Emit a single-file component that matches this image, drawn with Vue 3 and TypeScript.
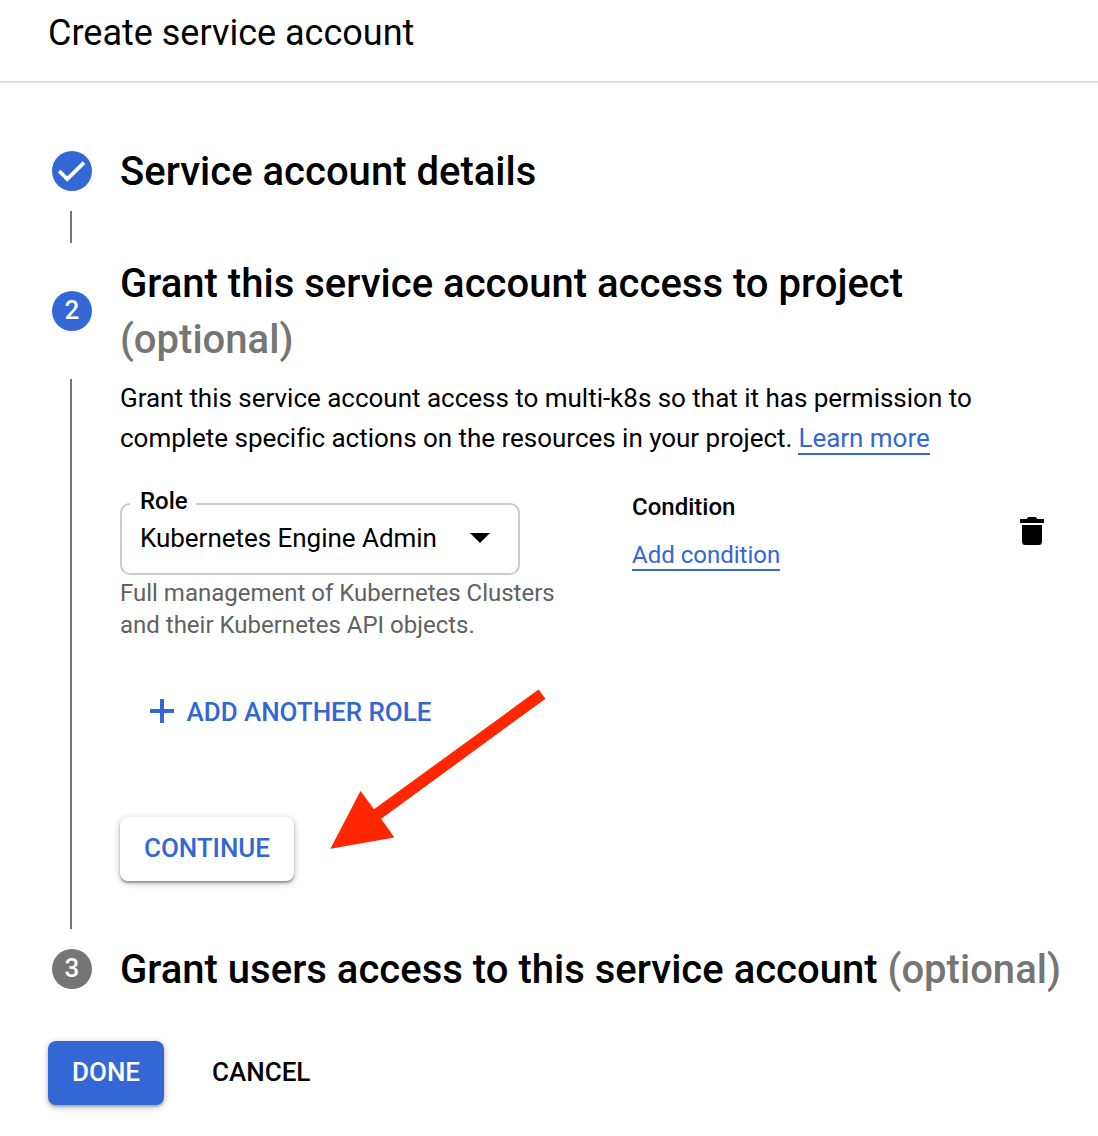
<script setup lang="ts">
const descriptionLines = [
  'Grant this service account access to multi-k8s so that it has permission to',
  'complete specific actions on the resources in your project.',
]
</script>

<template>
  <div class="page">
    <header class="bar">
      <h1 class="title">Create service account</h1>
    </header>

    <main class="stepper">
      <section class="step-head">
        <span class="badge done">
          <svg width="40" height="40" viewBox="0 0 40 40">
            <path d="M7.2 20 15.2 28 32 11.600" fill="none" stroke="#fff" stroke-width="3.800" />
          </svg>
        </span>
        <h2 class="heading">Service account details</h2>
      </section>
      <div class="connector"></div>

      <section class="step-head two">
        <span class="badge">2</span>
        <h2 class="heading">
          <span>Grant this service account access to project</span><br />
          <span class="optional">(optional)</span>
        </h2>
      </section>
      <div class="step-body">
        <div class="rail"></div>
        <div class="content">
          <div class="desc">
            <div>{{ descriptionLines[0] }}</div>
            <div class="desc-last">
              <span>{{ descriptionLines[1] }}</span>
              <div><a class="link">Learn more</a></div>
            </div>
          </div>
          <div class="role-row">
            <div class="role">
              <div class="select">
                <span class="label">Role</span>
                <span class="value">Kubernetes Engine Admin</span>
                <svg class="caret" width="20" height="10" viewBox="0 0 20 10"><path d="M0 0h20L10 10z" /></svg>
              </div>
              <p class="hint">Full management of Kubernetes Clusters and their Kubernetes API objects.</p>
            </div>
            <div class="condition">
              <div class="cond-title">Condition</div>
              <a class="link">Add condition</a>
            </div>
            <svg class="trash" width="24" height="28" viewBox="0 0 24 28">
              <path d="M0 2h7V1.600Q7.400 0 9 0h6q1.600 0 2 1.600V2h7v4H0zM2 8h20v16.500q0 3.500-3.500 3.500h-13Q2 28 2 24.500z" />
            </svg>
          </div>
          <button class="add">
            <svg width="24" height="24" viewBox="0 0 24 24"><path d="M10 0h4v10h10v4H14v10h-4V14H0v-4h10z" fill="#3367d6" /></svg>
            <span>ADD ANOTHER ROLE</span>
          </button>
          <button class="btn raised">CONTINUE</button>
        </div>
      </div>

      <section class="step-head three">
        <span class="badge grey">3</span>
        <h2 class="heading">Grant users access to this service account <span class="optional">(optional)</span></h2>
      </section>
    </main>

    <footer class="actions">
      <button class="btn primary">DONE</button>
      <button class="btn flat">CANCEL</button>
    </footer>

    <svg class="arrow" width="216" height="162" viewBox="330 688 216 162">
      <path d="M538.600 689.600 545.400 698.700 381.200 818.800 394.300 837.600 330.400 848.800 360.500 791 374 809.200z" fill="#ff2600" />
    </svg>
  </div>
</template>

<style>
body {
  margin: 0;
  background: #fff;
}
</style>

<style scoped>
.page {
  position: relative;
  width: 1098px;
  height: 1136px;
  overflow: hidden;
  background: #fff;
  color: #000;
  font-family: Roboto, 'Liberation Sans', sans-serif;
}
h1, h2, p {
  margin: 0;
}
button {
  border: 0;
  background: none;
  padding: 0;
  font: inherit;
  display: flex;
  align-items: center;
}
.bar {
  box-sizing: border-box;
  height: 83px;
  padding: 8px 48px 0;
  border-bottom: 2px solid #e0e0e0;
}
.title {
  font-size: 36px;
  line-height: 50px;
  font-weight: 400;
}
.stepper {
  padding: 60px 0 0 52px;
}
.step-head {
  display: flex;
  align-items: center;
  gap: 28px;
  height: 56px;
}
.step-head.two {
  height: 112px;
  margin-top: 12px;
}
.step-head.three {
  margin-top: 12px;
}
.heading {
  padding-top: 2px;
  font-size: 40px;
  line-height: 56px;
  font-weight: 500;
  letter-spacing: 0.015px;
  white-space: nowrap;
}
.optional {
  color: #757575;
}
.badge {
  width: 40px;
  height: 40px;
  flex: none;
  border-radius: 50%;
  background: #3367d6;
  color: #fff;
  font-size: 26px;
  font-weight: 500;
  line-height: 39px;
  text-align: center;
}
.badge.grey {
  background: #757575;
}
.badge svg {
  display: block;
}
.connector {
  width: 2px;
  height: 32px;
  margin: 12px 0 0 18px;
  background: #757575;
}
.step-body {
  display: flex;
  height: 550px;
  margin-top: 12px;
}
.rail {
  width: 2px;
  margin: 0 48px 0 18px;
  background: #757575;
}
.desc {
  width: 900px;
  font-size: 26px;
  line-height: 40px;
  letter-spacing: -0.015px;
  margin-top: -1px;
}
.desc-last {
  display: flex;
  gap: 6px;
  letter-spacing: -0.02px;
}
.link {
  color: #3367d6;
  border-bottom: 2px solid #3367d6;
}
.role-row {
  display: flex;
  align-items: flex-start;
  margin-top: 45px;
}
.role {
  width: 512px;
}
.select {
  position: relative;
  box-sizing: border-box;
  width: 400px;
  height: 72px;
  border: 2px solid #ccc;
  border-radius: 10px;
  display: flex;
  align-items: center;
  padding: 0 28px 2px 18px;
  justify-content: space-between;
}
.label {
  position: absolute;
  left: 8px;
  top: -18px;
  width: 56px;
  padding-left: 10px;
  background: #fff;
  font-size: 24px;
  font-weight: 500;
  line-height: 28px;
}
.value {
  font-size: 26px;
  letter-spacing: -0.03px;
}
.hint {
  width: 450px;
  margin-top: 2px;
  font-size: 24px;
  line-height: 32px;
  color: #616161;
}
.condition {
  width: 388px;
  font-size: 24px;
  line-height: 32px;
  margin-top: -12px;
}
.cond-title {
  font-weight: 500;
  margin-bottom: 16px;
}
.trash {
  margin-top: 14px;
}
.add {
  margin: 55px 0 0 30px;
  height: 32px;
  gap: 12.5px;
  font-size: 26px;
  font-weight: 500;
  letter-spacing: -0.04px;
  color: #3367d6;
}
.add svg {
  margin-bottom: 2px;
}
.btn {
  height: 64px;
  padding: 0 24px 2px;
  box-sizing: border-box;
  border-radius: 8px;
  font-size: 26px;
  font-weight: 500;
}
.raised {
  width: 174px;
  margin-top: 89px;
  color: #3367d6;
  background: #fff;
  letter-spacing: -0.05px;
  box-shadow: 0 2px 2px rgba(0, 0, 0, 0.3), 0 2px 6px 1px rgba(0, 0, 0, 0.2);
}
.actions {
  display: flex;
  gap: 24px;
  margin: 44px 0 0 48px;
}
.primary {
  width: 116px;
  color: #fff;
  background: #3367d6;
  box-shadow: 0 2px 2px rgba(0, 0, 0, 0.2), 0 2px 6px 1px rgba(0, 0, 0, 0.2);
}
.arrow {
  position: absolute;
  left: 330px;
  top: 688px;
}
</style>
